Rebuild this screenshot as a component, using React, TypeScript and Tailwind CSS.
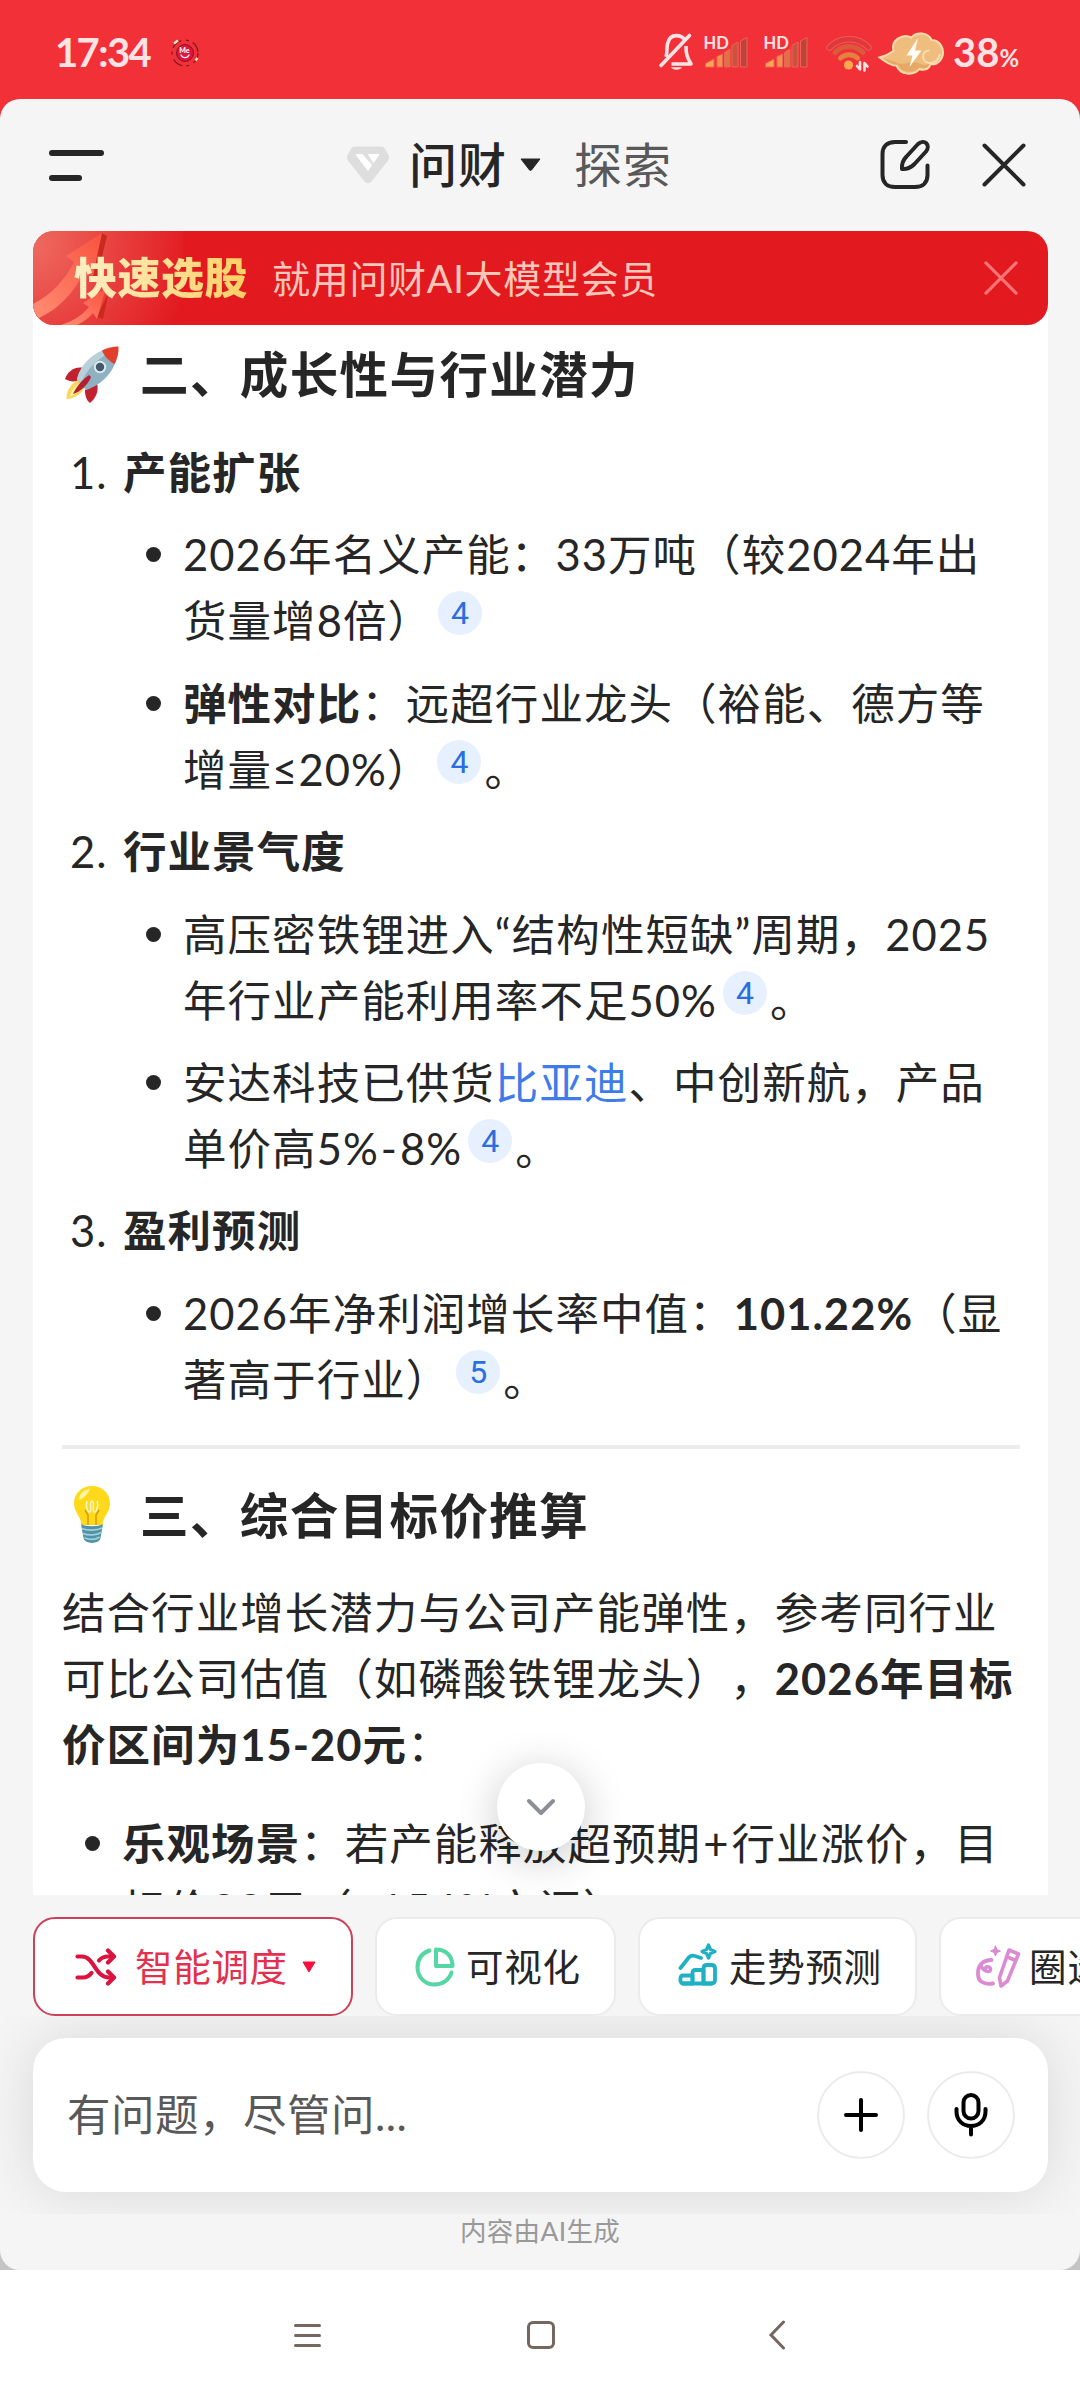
import React from "react";

const BellOff = () => (
  <svg className="w-[36px] h-[40px]" viewBox="0 0 36 40" fill="none" stroke="#ffe3e4" strokeWidth="3.6">
    <path d="M8 25 C9.5 21 8.5 16 9.5 12 C10.5 6.5 14 3.6 18.5 3.6 C22 3.6 24.5 4.8 26.5 7.5" />
    <path d="M28 14 C28 22 29 25 33 32 H13.5" strokeLinejoin="round" />
    <path d="M31.5 3.5 L3 33.5" strokeLinecap="round" />
    <path d="M13 35.3 H24 C23 38.6 14 38.6 13 35.3 Z" fill="#ffe3e4" stroke="none" />
  </svg>
);

const Signal = () => (
  <svg className="w-[44px] h-[34px] overflow-visible" viewBox="0 0 44 34" stroke="#f2605b" strokeWidth="1">
    <path d="M1.5 31 V27.5 L10 23 V31 Z" fill="#fba750" />
    <path d="M13 31 V20.5 L18.5 18 V31 Z" fill="#f39349" />
    <path d="M20.5 31 V16.5 L26 13 V31 Z" fill="#dc7440" />
    <path d="M28 31 V9.5 L34 6 V31 Z" fill="#c9543c" />
    <path d="M36.5 31 V5 L43 1.5 V31 Z" fill="#bb4538" />
    <text x="-0.5" y="12.5" fill="#ffe3e4" stroke="none" fontSize="16.5" fontWeight="700" fontFamily="Lato, sans-serif">
      HD
    </text>
  </svg>
);

const Wifi = () => (
  <svg className="w-[46px] h-[38px]" viewBox="0 0 46 38" fill="none" strokeLinecap="round">
    <path d="M3.5 12.5 C14 1.5 32 1.5 42.5 12.5" stroke="#f25a5a" strokeWidth="6.5" />
    <path d="M3.5 12.5 C14 1.5 32 1.5 42.5 12.5" stroke="#dd383b" strokeWidth="4.5" />
    <path d="M9 17.5 C17 9.5 29 9.5 37 17.5" stroke="#da5a3c" strokeWidth="5" />
    <path d="M14.5 23 C19.5 18.5 26.5 18.5 31.5 23" stroke="#e5813f" strokeWidth="5" />
    <circle cx="22.5" cy="30" r="4.6" fill="#fba750" />
    <path d="M34 27 V34.5 L31 31 M38.500 35.500 V28 L41.500 31.500" stroke="#ffe3e4" strokeWidth="2.6" strokeLinejoin="round" />
  </svg>
);

const ChargeCloud = () => (
  <svg className="w-[67px] h-[44px]" viewBox="0 0 67 44">
    <path
      d="M1.5 25.5 C8 24 12 21.500 15.500 19 C12.500 8 25 1 33.500 5.500 C38 -0.500 50 0 53.500 8 C63 8 67.500 19 63.500 26.500 C61 31.500 56 33 52.500 32 C51 38 45 38.500 41.500 37 C36 44 22 43.500 18.500 33.500 C12 34 7 29 1.500 25.500 Z"
      fill="#efbd7d"
      stroke="#fbdcae"
      strokeWidth="2"
    />
    <path d="M18 30 C24 35 32 28 40 31 C46 34 49 33 52 31 C50 37 45 37 41.500 35.500 C36 41.500 24 41.500 20 33 C14 33 10 30 6 26.500 Z" fill="#e6a965" />
    <path d="M51.500 18.500 C43 18.500 43 30 51 31 C57 31.500 61 27 62 22" fill="none" stroke="#fbdcae" strokeWidth="2" />
    <path d="M40 6 L28.500 23.500 H34.500 L31.500 35 L43.500 18.500 H37 Z" fill="#fffdf6" />
  </svg>
);

const MeBadge = () => (
  <svg className="w-[28px] h-[30px]" viewBox="0 0 28 30" fill="none">
    <circle cx="14" cy="15" r="13" stroke="#7c1620" strokeWidth="1.2" strokeDasharray="11 5 3 4" />
    <circle cx="14" cy="15" r="8.500" fill="#e0143c" stroke="#8a1226" strokeWidth="1" />
    <path d="M3 5.500 L7 2.500 M24.500 22.500 L26.500 20" stroke="#ffe9c9" strokeWidth="2.200" />
    <path d="M10 17 C11.500 20.500 16.500 20.500 18 17" stroke="#fff" strokeWidth="1.300" strokeLinecap="round" />
    <text x="8.300" y="15" fill="#fff" fontSize="7" fontWeight="900" fontFamily="Lato, sans-serif">
      Me
    </text>
  </svg>
);

const Rocket = () => (
  <svg className="w-[56px] h-[58px]" viewBox="0 0 56 58">
    <path d="M15 34 C6 39 2 47 2.500 54 C9 54 17 50 21 42 Z" fill="#fbd75c" />
    <path d="M16 38 C10 42 7 46 6 51 C11 50 15 47 18 42 Z" fill="#fff0a8" />
    <path d="M20 23 C11 21 4 26 1 34 C6 37 11 37 15 35 Z" fill="#c22230" />
    <path d="M33 38 C35 46 32 53 26 58 C22 55 21 50 21 45 Z" fill="#c22230" />
    <path d="M13 35 C15 22 29 6 54 1.500 C55 24 38 40 22 45 Z" fill="#8fb1c1" />
    <path d="M13 35 C15 22 27 9 42 4 L45 8 C32 15 22 25 17 39 Z" fill="#b8d0da" />
    <path d="M38 5.500 C43 3 49 1.500 54.500 1.500 C55 8 53 14 50.500 19 C45 16 40 11 38 5.500 Z" fill="#e0402b" />
    <circle cx="36" cy="22" r="5.200" fill="#45586a" stroke="#dce8ed" strokeWidth="2" />
    <path d="M25 30 C18 35 12 42 9 49 C16 47 24 40 27 32 Z" fill="#b51f30" />
  </svg>
);

const Bulb = () => (
  <svg className="w-[56px] h-[60px]" viewBox="0 0 56 60">
    <path d="M28 1 C17 1 10 9 10 18.500 C10 28 17 31 17.500 40 H38.500 C39 31 46 28 46 18.500 C46 9 39 1 28 1 Z" fill="#ffd91a" />
    <path d="M15 12 C17 7 21 4.500 26 4 C24 9 20 13 15 15 Z" fill="#fff3a0" />
    <path d="M24 40 V30 L21 25 M32 40 V30 L35 25" fill="none" stroke="#d99a10" strokeWidth="1.500" />
    <path d="M23 16 C21 21 24 28 26 27 C28 26 25 16 28 16 C31 16 28 26 30 27 C32 28 35 21 33 16" fill="none" stroke="#fff7c8" strokeWidth="1.500" />
    <path d="M17 39 C22 42 34 42 39 39 L36.500 53 C35 59.500 21 59.500 19.500 53 Z" fill="#4f93a8" />
    <path d="M18 43.500 C24 46 33 45.500 38 43 M19 48.500 C25 51 33 50 37 47.500 M20.500 53 C26 55 32 54.500 35.500 52" fill="none" stroke="#a3cfd8" strokeWidth="1.800" />
  </svg>
);

const Logo = () => (
  <svg className="w-[44px] h-[40px]" viewBox="0 0 44 40">
    <path d="M9 1.500 H35 C37 1.500 38 2.200 39 3.800 L42.500 10 C43.500 12 43.500 13.500 42 15.500 L26 36 C23.500 39 20.500 39 18 36 L2 15.500 C0.500 13.500 0.500 12 1.500 10 L5 3.800 C6 2.200 7 1.500 9 1.500 Z" fill="#dedede" />
    <path d="M10 9.500 H16.500 L25.500 20 L22 25.500 Z M22.500 9.500 H33 L27.500 17.500 Z" fill="#fff" stroke="#fff" strokeLinejoin="round" />
  </svg>
);

const Compose = () => (
  <svg className="w-[52px] h-[52px]" viewBox="0 0 52 52" fill="none" stroke="#262626" strokeWidth="4" strokeLinecap="round" strokeLinejoin="round">
    <path d="M26 3 H15 C7 3 2.500 7.500 2.500 15 V36 C2.500 43.500 7 48 15 48 H35 C43 48 47.500 43.500 47.500 36 V26.500" />
    <path d="M22 30 C21.500 25 23 21 26.500 17.500 L38 5 C44.500 -0.500 51 6 46 12.500 L34.500 25 C31 28.500 27 30.500 22 30 Z" />
  </svg>
);

const Cross = ({ className }: { className: string }) => (
  <svg className={className} viewBox="0 0 44 44" fill="none" stroke="currentColor" strokeWidth="4" strokeLinecap="round">
    <path d="M2.500 2.500 L41.500 41.500 M41.500 2.500 L2.500 41.500" />
  </svg>
);

const BannerArrows = () => (
  <svg className="absolute left-0 top-0 w-[100px] h-[94px]" viewBox="0 0 100 94">
    <defs>
      <linearGradient id="arrow" x1="0" y1="1" x2="1" y2="0">
        <stop offset="0" stopColor="#ff8d73" />
        <stop offset="1" stopColor="#f9523f" />
      </linearGradient>
    </defs>
    <path d="M69 2 L74 5 L64 46 L58 44 Z" fill="#c92a1f" />
    <path d="M0 73 C18 64 32 49 41 31 L33 25 L69 2 L60 45 L52 40 C41 62 24 79 6 87 C2 83 0 78 0 73 Z" fill="url(#arrow)" />
    <path d="M76 60 L70 88 L64 86 Z" fill="#c92a1f" />
    <path d="M28 94 C41 90 50 83 56 76 L50 72 L73 57 L64 88 L60 82 C55 88 48 92 44 94 Z" fill="url(#arrow)" />
  </svg>
);

const Shuffle = () => (
  <svg className="w-[42px] h-[38px]" viewBox="0 0 42 38" fill="none" stroke="#dc123f" strokeWidth="4.200" strokeLinecap="round" strokeLinejoin="round">
    <path d="M2.500 8.500 H7 C19 8.500 20 29.500 34 29.500 H38.500" />
    <path d="M2.500 29.500 H8 C12 29.500 14.500 27.500 16.500 25" />
    <path d="M24 12.500 C26.500 9.500 29 8.500 33 8.500 H38.500" />
    <path d="M33 2.500 L39 8.500 L33 14.500 M33 23.500 L39 29.500 L33 35.500" />
  </svg>
);

const Pie = () => (
  <svg className="w-[40px] h-[40px]" viewBox="0 0 40 40" fill="none" stroke="#56d6a4" strokeWidth="4" strokeLinecap="round" strokeLinejoin="round">
    <path d="M14.500 3.500 C6 6.500 2.500 13 2.500 20.500 C2.500 30 10 37.500 19.500 37.500 C28 37.500 34.500 32.500 36.500 25.500" />
    <path d="M21 2.500 C31 2.500 37.500 9 37.500 19 H21 Z" />
  </svg>
);

const Trend = () => (
  <svg className="-mt-[6px] w-[40px] h-[44px]" viewBox="0 0 40 44" fill="none" stroke="#1eb1c3" strokeWidth="3.800" strokeLinecap="round" strokeLinejoin="round">
    <path d="M2.500 26 L10 16.500 C12 13.500 14 13 17 14 L23 16" />
    <path d="M30.500 3 L32.500 7.500 L37 9.500 L32.500 11.500 L30.500 16 L28.500 11.500 L24 9.500 L28.500 7.500 Z" strokeWidth="3.200" />
    <path d="M5 33.500 H14.500 V41.500 H5 C1.500 41.500 1.500 33.500 5 33.500 Z" />
    <path d="M14.500 41.500 V31 C14.500 29 15.500 28 17.500 28 H25.500 V41.500" />
    <path d="M25.500 41.500 V26.500 C25.500 24 26.500 23 29 23 H33.500 C36 23 37 24 37 26.500 V38 C37 40.500 36 41.500 33.500 41.500 Z" />
    <path d="M5 41.500 H34" />
  </svg>
);

const CirclePencil = () => (
  <svg className="-ml-[4px] -mr-[3px] w-[46px] h-[44px]" viewBox="0 0 46 44" fill="none" stroke="#da8bd4" strokeWidth="3.800" strokeLinecap="round" strokeLinejoin="round">
    <path d="M20.500 1 L22 4.500 L25.500 6 L22 7.500 L20.500 11 L19 7.500 L15.500 6 L19 4.500 Z" fill="#da8bd4" strokeWidth="1" />
    <path d="M16.500 15 C9 15 3 19 3 28 C2.500 36 8 40 18 38.500" />
    <path d="M5.500 20 C9 28 17 28 15.500 23.500 C14.500 21 10.500 21.500 10.500 23.500" strokeWidth="3.400" />
    <path d="M34 5 L43.500 9 L32.500 36 L26 41 L24.500 32.500 Z M31.500 11.500 L40.500 15.500" strokeWidth="3.600" />
  </svg>
);

const Mic = () => (
  <svg className="w-[36px] h-[46px]" viewBox="0 0 36 46" fill="none" stroke="#000" strokeWidth="4" strokeLinecap="round">
    <rect x="10.500" y="3" width="15" height="23.500" rx="7.500" />
    <path d="M3.500 17 V19.500 C3.500 28.500 10 34 18 34 C26 34 32.500 28.500 32.500 19.500 V17 M18 34 V42.500" />
  </svg>
);

const Cite = ({ n }: { n: number }) => (
  <span className="relative -top-[13px] ml-[6px] mr-[3px] inline-flex size-[44px] items-center justify-center rounded-full bg-[#e6f0ff] align-middle font-[Roboto,sans-serif] text-[32px] leading-none tracking-normal text-[#2a6fdf]">
    {n}
  </span>
);

const B = ({ children }: { children: React.ReactNode }) => <strong className="font-bold">{children}</strong>;

// Each entry of lines is one row of the paragraph
const Bullet = ({ lines }: { lines: React.ReactNode[] }) => (
  <li className="flex">
    <span className="mt-[26px] mr-[22px] size-[15px] shrink-0 rounded-full bg-[#262626]" />
    <div>
      {lines.map((line, i) => (
        <div key={i} className="h-[66px]">
          {line}
        </div>
      ))}
    </div>
  </li>
);

interface SectionProps {
  no: number;
  title: string;
  items: React.ReactNode[][];
}

const Section = ({ no, title, items }: SectionProps) => (
  <li className="flex flex-col gap-[16.4px]">
    <div className="flex h-[66px] pl-[8px]">
      <span className="w-[53px]">{no}.</span>
      <B>{title}</B>
    </div>
    <ul className="flex flex-col gap-[16.4px] pl-[84px]">
      {items.map((lines, i) => (
        <Bullet key={i} lines={lines} />
      ))}
    </ul>
  </li>
);

const sections: SectionProps[] = [
  {
    no: 1,
    title: "产能扩张",
    items: [
      ["2026年名义产能：33万吨（较2024年出", <>货量增8倍）<Cite n={4} /></>],
      [<><B>弹性对比</B>：远超行业龙头（裕能、德方等</>, <>增量≤20%）<Cite n={4} />。</>],
    ],
  },
  {
    no: 2,
    title: "行业景气度",
    items: [
      ["高压密铁锂进入“结构性短缺”周期，2025", <>年行业产能利用率不足50%<Cite n={4} />。</>],
      [
        <>安达科技已供货<a className="text-[#3f7bea]">比亚迪</a>、中创新航，产品</>,
        <>单价高5%<span className="mx-[2px]">-</span>8%<Cite n={4} />。</>,
      ],
    ],
  },
  {
    no: 3,
    title: "盈利预测",
    items: [[<>2026年净利润增长率中值：<B>101.22%</B>（显</>, <>著高于行业）<Cite n={5} />。</>]],
  },
];

const Heading = ({ icon, children }: { icon: React.ReactNode; children: string }) => (
  <h3 className="flex h-[70px] items-center gap-[20px] pl-[2px] text-[48.500px] font-bold leading-[70px] tracking-[1.400px]">
    {icon}
    {children}
  </h3>
);

const Chip = ({ icon, label, width }: { icon: React.ReactNode; label: string; width: string }) => (
  <button className={`flex h-[99px] shrink-0 items-center gap-[11px] rounded-[22px] border-2 border-[#ebebeb] bg-white pl-[38px] ${width}`}>
    {icon}
    {label}
  </button>
);

export default function App() {
  return (
    <div className="flex h-[2400px] w-[1080px] flex-col overflow-hidden whitespace-nowrap bg-white font-[Lato,'Noto_Sans_CJK_SC',sans-serif] text-[#262626] [text-spacing-trim:space-all]">
      {/* Status bar */}
      <div className="-mb-[30px] flex h-[129px] shrink-0 items-start bg-[#f23038] pt-[32px] text-[#ffe3e4]">
        <span className="ml-[55px] h-[40px] w-[116px] text-[40px] font-bold leading-[40px] tracking-[-1.600px]">17:34</span>
        <div className="mt-[6px]"><MeBadge /></div>
        <div className="ml-auto flex pr-[60px]">
          <div className="mr-[10px]"><BellOff /></div>
          <div className="mr-[16px] mt-[4px]"><Signal /></div>
          <div className="mr-[18px] mt-[4px]"><Signal /></div>
          <div className="mr-[6px] mt-[3px]"><Wifi /></div>
          <ChargeCloud />
          <div className="ml-[8px] flex h-[40px] w-[67px] items-baseline text-[40px] font-bold leading-[40px]">
            38<span className="text-[24px]">%</span>
          </div>
        </div>
      </div>

      <div className="shrink-0 bg-[linear-gradient(to_bottom,transparent_50%,#c4c4c4_99%)]">
        <div className="flex h-[2171px] flex-col overflow-hidden rounded-[20px] bg-[#f5f5f5]">
          {/* Header */}
          <header className="flex h-[132px] shrink-0 items-center pl-[49px] pr-[54px]">
            <div className="flex w-[297px] flex-col gap-[19px]">
              <span className="h-[6px] w-[55px] rounded-full bg-[#262626]" />
              <span className="h-[6px] w-[33px] rounded-full bg-[#262626]" />
            </div>
            <Logo />
            <span className="ml-[19px] text-[48px] font-medium leading-[60px] tracking-[1px]">问财</span>
            <svg className="ml-[12px] w-[23px] h-[14px]" viewBox="0 0 23 14">
              <path d="M2 1 H21 L12.500 12 Q11.500 13 10.500 12 Z" fill="#262626" stroke="#262626" strokeLinejoin="round" />
            </svg>
            <span className="ml-[32px] text-[48px] leading-[60px] tracking-[1px] text-[#595959]">探索</span>
            <div className="ml-auto flex items-center gap-[50px]">
              <Compose />
              <Cross className="size-[44px]" />
            </div>
          </header>

          {/* Promo banner */}
          <div className="relative z-10 ml-[33px] mr-[32px] flex h-[94px] shrink-0 items-center overflow-hidden rounded-[21px] bg-[#e2191f]">
            <div className="absolute inset-y-0 left-0 w-[150px] bg-[radial-gradient(circle_at_0_15%,#ee6a60,transparent_95%)]" />
            <BannerArrows />
            <span className="relative ml-[41px] bg-gradient-to-r from-[#ffefc4] to-[#ffd061] bg-clip-text text-[43px] font-black leading-[60px] tracking-[0.500px] text-transparent">
              快速选股
            </span>
            <span className="ml-[24px] text-[38px] leading-[60px] tracking-[0.700px] text-[#ffc6ba]">就用问财AI大模型会员</span>
            <Cross className="ml-auto mr-[30px] size-[34px] text-[#ff7477]" />
          </div>

          {/* Answer */}
          <div className="relative -mt-[30px] h-[1600px] shrink-0">
            <main className="ml-[33px] mr-[32px] h-full overflow-hidden bg-white pl-[29px] pr-[28px] pt-[44px] text-[43.500px] leading-[66px] tracking-[1.050px]">
              <Heading icon={<Rocket />}>二、成长性与行业潜力</Heading>
              <ol className="mt-[30px] flex flex-col gap-[16.4px]">
                {sections.map((s) => (
                  <Section key={s.no} {...s} />
                ))}
              </ol>
              <hr className="mt-[33px] mb-[31px] border-t-4 border-[#ececec]" />
              <Heading icon={<Bulb />}>三、综合目标价推算</Heading>
              <p className="mt-[29px]">
                结合行业增长潜力与公司产能弹性，参考同行业
                <br />
                可比公司估值（如磷酸铁锂龙头），<B>2026年目标</B>
                <br />
                <B>价区间为15-20元</B>：
              </p>
              <ul className="mt-[33px] pl-[23px]">
                <Bullet
                  lines={[
                    <><B>乐观场景</B>：若产能释放超预期<span className="mx-[2px]">+</span>行业涨价，目</>,
                    "标价22元（+154%空间）",
                  ]}
                />
              </ul>
            </main>
            <button className="absolute left-[497px] top-[1468px] flex size-[88px] items-center justify-center rounded-full bg-white shadow-[0_8px_44px_rgba(0,0,0,0.22)]">
              <svg className="w-[30px] h-[18px]" viewBox="0 0 30 18" fill="none" stroke="#8b8d97" strokeWidth="4" strokeLinecap="round" strokeLinejoin="round">
                <path d="M3 3 L15 15 L27 3" />
              </svg>
            </button>
          </div>

          {/* Tool chips */}
          <div className="relative flex h-[121px] shrink-0 gap-[22px] bg-[#f5f5f5] pl-[33px] pt-[22px] text-[37.500px] leading-[60px] tracking-[0.700px]">
            <button className="flex h-[99px] w-[320px] shrink-0 items-center rounded-[22px] border-2 border-[#cc4059] bg-white pl-[40px] text-[#e2304e]">
              <Shuffle />
              <span className="ml-[18px]">智能调度</span>
              <svg className="ml-[14px] w-[14px] h-[12px]" viewBox="0 0 14 12">
                <path d="M1 1 H13 L7 11 Z" fill="#fa0f3c" stroke="#fa0f3c" strokeLinejoin="round" />
              </svg>
            </button>
            <Chip icon={<Pie />} label="可视化" width="w-[241px]" />
            <Chip icon={<Trend />} label="走势预测" width="w-[279px]" />
            <Chip icon={<CirclePencil />} label="圈选" width="w-[250px]" />
          </div>

          {/* Input */}
          <div className="h-[198px] shrink-0 overflow-hidden pl-[33px] pr-[32px] pt-[22px]">
            <div className="flex h-[154px] items-center rounded-[33px] bg-white pl-[34px] pr-[33px] shadow-[0_0_60px_rgba(0,0,0,0.12)]">
              <span className="text-[43.500px] tracking-[0.500px] text-[#595959]">有问题，尽管问...</span>
              <button className="ml-auto flex size-[88px] items-center justify-center rounded-full border-[2.500px] border-[#ebebeb]">
                <svg className="size-[36px]" viewBox="0 0 36 36" stroke="#000" strokeWidth="4" strokeLinecap="round">
                  <path d="M18 3 V33 M3 18 H33" />
                </svg>
              </button>
              <button className="ml-[22px] flex size-[88px] items-center justify-center rounded-full border-[2.500px] border-[#ebebeb]">
                <Mic />
              </button>
            </div>
          </div>
          <p className="pt-[1px] text-center text-[26.500px] leading-[32px] tracking-[0.300px] text-[#999]">内容由AI生成</p>
        </div>
      </div>

      {/* System navigation */}
      <nav className="flex h-[130px] shrink-0 items-center bg-white text-[#75675d]">
        <div className="ml-[294px] flex w-[27px] flex-col gap-[7px]">
          <span className="h-[3px] rounded-full bg-current" />
          <span className="h-[3px] rounded-full bg-current" />
          <span className="h-[3px] rounded-full bg-current" />
        </div>
        <div className="ml-[206px] size-[28px] rounded-[6px] border-3 border-current" />
        <svg className="ml-[213px] w-[18px] h-[30px]" viewBox="0 0 18 30" fill="none" stroke="currentColor" strokeWidth="3" strokeLinecap="round">
          <path d="M15.500 2 L3 15 L15.500 28" />
        </svg>
      </nav>
    </div>
  );
}
